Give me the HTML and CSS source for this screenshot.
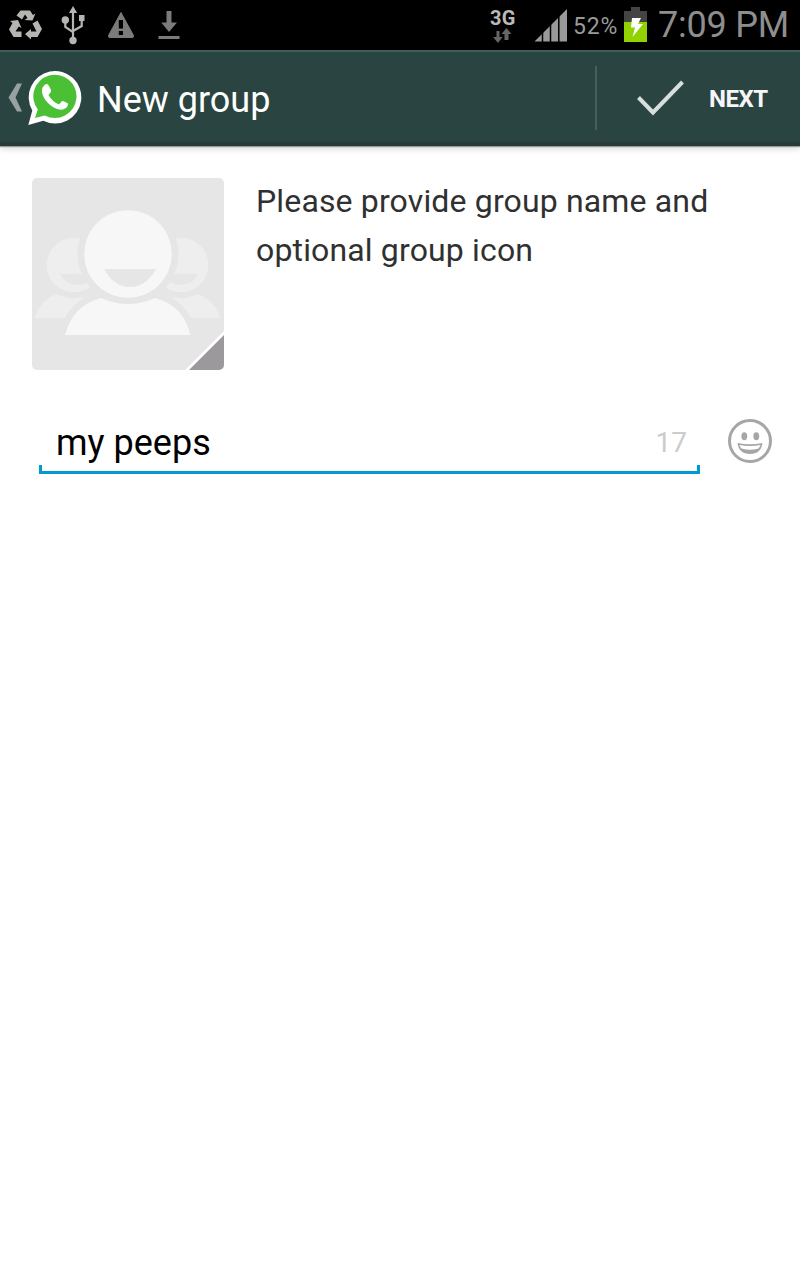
FILE: index.html
```html
<!DOCTYPE html>
<html lang="en">
<head>
<meta charset="utf-8">
<title>New group</title>
<link rel="stylesheet" href="styles.css">
</head>
<body>
<div class="status">
  <svg class="notices" width="190" height="50" viewBox="0 0 190 50">
    <g fill="#b5b5b2">
      <path d="M16.500 15.500L20.500 10.500H30L33 15L35.500 13.500L32.500 20.500L24.500 20L27.500 18L25 14.500L22 19.500Z"/>
      <path d="M10 21L18 20L21.500 28L18.800 26.500L15.500 31.500H21.500V37H13.500L9 29.500L12.500 23Z"/>
      <path d="M32.500 23.500L37.500 20.500L42 29L37.500 37H31V39.500L25 34L31 29V31.500H36.500Z"/>
      <path d="M73 6L77.200 13H69Z"/><circle cx="65.300" cy="20" r="3.700"/><path d="M79 15H84.500V21H79Z"/><circle cx="73" cy="40.500" r="3.700"/>
    </g>
    <path d="M73 11V39M65.300 21V27L73 32M81.700 20V26L73 31" fill="none" stroke="#b5b5b2" stroke-width="2.200"/>
    <path d="M121 12.500L133.500 35.500Q134 37.500 132 37.500H110Q108 37.500 108.500 35.500Z" fill="#7b7c79" stroke="#7b7c79"/>
    <path d="M118.800 20H123V28.500H118.800ZM118.800 31H123V35H118.800Z" fill="#000"/>
    <path d="M166.500 11H171.500V22.500H177L169 32L161.300 22.500H166.500ZM158.500 36H179.500V39H158.500Z" fill="#7b7c79"/>
  </svg>
  <div class="network">
    <span class="threeg">3G</span>
    <svg width="22" height="15" viewBox="0 0 22 15"><path d="M5.500 3H8.500V9H11.500L7 15L2 9H5.500ZM13.500 12V6H10.500L15.500 0L20.500 6H17.500V12Z" fill="#666"/></svg>
  </div>
  <svg class="signal" width="34" height="34" viewBox="0 0 34 34"><path d="M0.500 32.500L33 0V32.500Z" fill="#999"/><path d="M8.500 20V33M16.500 10V33M24.800 3V33" stroke="#000" stroke-width="1.500"/></svg>
  <span class="percent">52%</span>
  <svg class="battery" width="23" height="35" viewBox="0 0 23 35"><path d="M7 0H16V4H23V15H0V4H7Z" fill="#444"/><path d="M0 15H23V35H0Z" fill="#91d200"/><path d="M8 11H17L14 17H19L8.500 30L11 20.500H7Z" fill="#fff"/></svg>
  <span class="clock">7:09 PM</span>
</div>
<header class="bar">
  <svg class="brand" width="90" height="60" viewBox="0 0 90 60">
    <path d="M17 15.500H22L15.500 29.500L22 43.500H17L8.500 29.500Z" fill="#95a2a0"/>
    <path d="M28.300 57L32.300 42.500A26.300 26.300 0 1 1 43.300 52.800Z" fill="#fff"/>
    <path d="M35 50L37.800 41.500A21.600 21.600 0 1 1 44.800 47.400Z" fill="#4cc034"/>
    <path d="M44.500 17Q47.500 14.500 49 18L51 22Q51.500 24 48.500 27Q52 33.500 59 36.500L62 33Q63.500 32.500 68 35.500Q68 39 65 40.500Q60 43.500 53 39C46 34.500 42 28 42 23Q42 19 44.500 17Z" fill="#fff"/>
  </svg>
  <h1 class="title">New group</h1>
  <div class="next">
    <svg class="check" width="52" height="40" viewBox="0 0 52 40"><path d="M3.500 19.500L18 34.500L47.500 4" fill="none" stroke="#d8dedc" stroke-width="4"/></svg>
    <span class="nextlabel">NEXT</span>
  </div>
</header>
<main class="content">
  <section class="intro">
    <svg class="avatar" width="192" height="192" viewBox="0 0 192 192">
      <rect width="192" height="192" fill="#e6e6e6"/>
      <g fill="#eee">
        <circle cx="42" cy="87" r="27.300"/><circle cx="149" cy="87" r="27.300"/>
        <path d="M3 140Q8 122 25 116Q42 124 60 117L75 117L32 140ZM188 140Q183 122 166 116Q149 124 132 117L117 117L159 140Z"/>
      </g>
      <path d="M28 96H52L57 103Q52 107 44 107Q34 107 28 96ZM166 96H142L137 103Q142 107 150 107Q160 107 166 96Z" fill="#e6e6e6"/>
      <circle cx="96" cy="76" r="50.500" fill="#e6e6e6"/>
      <path d="M32 141Q42 123 62 115L130 115Q150 123 160 141Z" fill="#e6e6e6"/>
      <circle cx="96" cy="76" r="43.800" fill="#f7f7f7"/>
      <path d="M72 91H124Q114 109 98 109Q82 109 72 91Z" fill="#e6e6e6"/>
      <path d="M33 157Q41 127 69 120Q96 132 123 120Q151 127 158.500 157Z" fill="#f7f7f7"/>
      <path d="M153 192L192 153V192Z" fill="#fff"/><path d="M157 192L192 157V192Z" fill="#9b999c"/>
    </svg>
    <p class="hint">Please provide group name and<br>optional group icon</p>
  </section>
  <section class="entry">
    <div class="field"><span class="name">my peeps</span><span class="count">17</span></div>
    <svg class="smile" width="44" height="44" viewBox="0 0 44 44"><circle cx="22" cy="22" r="20.500" fill="none" stroke="#a6a6a6" stroke-width="3"/><ellipse cx="16.300" cy="17.300" rx="2.900" ry="4" fill="#a6a6a6"/><ellipse cx="28.300" cy="17.300" rx="2.900" ry="4" fill="#a6a6a6"/><path d="M9.500 24Q22 26.500 34.500 24Q33 35 22 35Q11 35 9.500 24Z" fill="#a6a6a6"/><path d="M11.500 26Q22 28 32.500 26Q31.500 28.500 30.500 29.500Q22 32 13.500 29.500Q12 28 11.500 26Z" fill="#fff"/></svg>
  </section>
</main>
</body>
</html>
```
FILE: styles.css
```css
* { box-sizing: border-box; }
body { margin: 0; background: #fff; font-family: Roboto, "Liberation Sans", sans-serif; height: 1280px; }
svg { display: block; flex: none; }
.status { height: 50px; background: #000; display: flex; align-items: flex-start; white-space: nowrap; }
.network { margin-left: 299px; width: 34px; padding-top: 7px; }
.network svg { margin-left: 2px; margin-top: -1px; }
.threeg { display: block; font-size: 20px; line-height: 22px; font-weight: 700; color: #bababa; letter-spacing: .3px; padding-left: 1px; }
.signal { margin: 9px 0 0 11px; }
.percent { margin: 13px 0 0 5px; width: 51px; font-size: 23px; line-height: 28px; color: #999; letter-spacing: .8px; }
.battery { margin: 7px 0 0 0; }
.clock { margin: 3px 0 0 11px; font-size: 36px; line-height: 44px; color: #8e8e8e; letter-spacing: -.2px; }
.bar { height: 96px; background: #2a4541; border-top: 2px solid #415d59; border-bottom: 4px solid #293b38; box-shadow: 0 1px 1px #999, 0 3px 6px rgba(0,0,0,.15); display: flex; align-items: center; color: #fff; }
.brand { margin-top: 1px; }
.title { margin: 5px 0 0 7px; font-size: 36px; line-height: 44px; font-weight: 400; letter-spacing: 0; }
.next { margin-left: auto; width: 205px; height: 64px; display: flex; align-items: center; border-left: 2px solid #475f5b; padding-left: 38px; margin-top: 2px; }
.check { margin-top: 0; }
.nextlabel { margin: 2px 0 0 22px; font-size: 24px; line-height: 28px; font-weight: 700; color: #f8f5f8; letter-spacing: -.5px; }
.content { padding: 32px; }
.intro { display: flex; }
.avatar { border-radius: 5px; }
.hint { margin: -1px 0 0 32px; font-size: 32px; line-height: 49px; color: #303030; letter-spacing: .15px; white-space: nowrap; }
.entry { display: flex; margin: 45px -4px 0 7px; align-items: flex-start; }
.field { width: 661px; height: 59px; display: flex; justify-content: space-between; padding: 6px 13px 0 17px; border-bottom: 3px solid #0099d0; background: linear-gradient(#0099d0,#0099d0) 0 100% / 3px 6px no-repeat, linear-gradient(#0099d0,#0099d0) 100% 100% / 3px 6px no-repeat; }
.name { font-size: 36px; line-height: 44px; color: #000; letter-spacing: 0; }
.count { font-size: 28px; line-height: 44px; color: #ccc; }
.smile { margin: 4px 0 0 28px; }
```
